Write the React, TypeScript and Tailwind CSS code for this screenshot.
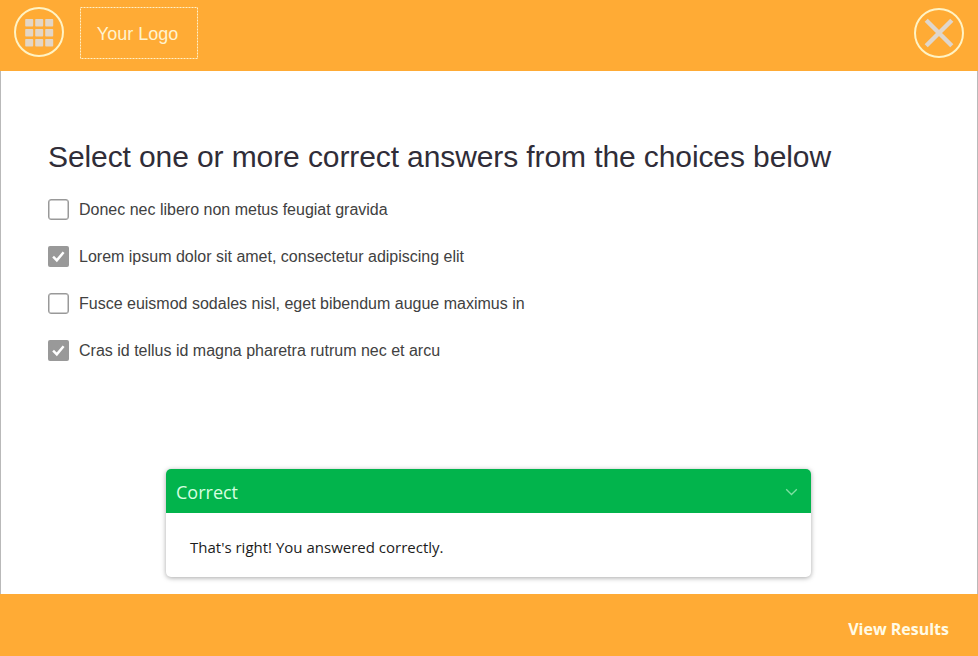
const choices = [
  { text: 'Donec nec libero non metus feugiat gravida', checked: false },
  { text: 'Lorem ipsum dolor sit amet, consectetur adipiscing elit', checked: true },
  { text: 'Fusce euismod sodales nisl, eget bibendum augue maximus in', checked: false },
  { text: 'Cras id tellus id magna pharetra rutrum nec et arcu', checked: true },
];

function MenuIcon() {
  const cells = [0, 1, 2];
  return (
    <svg className="block" width="50" height="50" viewBox="0 0 50 50">
      <circle cx="25" cy="25" r="24" fill="none" stroke="#fff3c4" strokeWidth="2" />
      {cells.map((r) =>
        cells.map((c) => (
          <rect key={`${r}-${c}`} x={11.2 + c * 10} y={12 + r * 10} width="8" height="7.6" rx="0.8" fill="#e3d6c6" />
        )),
      )}
    </svg>
  );
}

function CloseIcon() {
  return (
    <svg className="block" width="50" height="50" viewBox="0 0 50 50">
      <circle cx="25" cy="25" r="24" fill="none" stroke="#fff3c4" strokeWidth="2" />
      <path d="M12.2 12.2 37.8 37.8M37.8 12.2 12.2 37.8" stroke="#dfd6cc" strokeWidth="4.4" fill="none" />
    </svg>
  );
}

function Checkbox({ checked }: { checked: boolean }) {
  return checked ? (
    <span className="flex h-[21px] w-[21px] shrink-0 items-center justify-center rounded-[2px] bg-[#999999]">
      <svg width="21" height="21" viewBox="0 0 21 21">
        <path d="M5.1 10.7 8.8 14.3 15.6 6.3" stroke="#fff" strokeWidth="2.5" fill="none" />
      </svg>
    </span>
  ) : (
    <span className="h-[21px] w-[21px] shrink-0 rounded-[3px] border border-[#999999] bg-white shadow-[inset_0_0_0_0.5px_#999999]" />
  );
}

export default function App() {
  return (
    <div className="flex h-[656px] w-[978px] flex-col overflow-hidden bg-white font-['Liberation_Sans',Arial,sans-serif]">
      <header className="flex h-[71px] shrink-0 items-start justify-between bg-[#ffab35] pt-[7px] pr-[14px] pl-[14px]">
        <div className="flex items-start gap-4">
          <button><MenuIcon /></button>
          <div className="relative flex h-[52px] w-[118px] items-center justify-center pt-[2px] pr-[3px] text-[18px] text-[#fff3cf]">
            <svg className="absolute inset-0" width="118" height="52" viewBox="0 0 118 52">
              <rect x="0.5" y="0.5" width="117" height="51" fill="none" stroke="#fff0c8" strokeDasharray="2 1" />
            </svg>
            <span className="whitespace-nowrap">Your Logo</span>
          </div>
        </div>
        <button className="mt-px"><CloseIcon /></button>
      </header>

      <main className="flex h-[523px] shrink-0 flex-col border-x border-[#b9b9b9] pl-[47px]">
        <h1 className="mt-[68px] text-[30px] leading-[36px] tracking-[-0.1px] whitespace-nowrap text-[#302d38]">
          Select one or more correct answers from the choices below
        </h1>
        <ul className="mt-[24px] flex flex-col gap-[26px]">
          {choices.map((c) => (
            <li key={c.text} className="flex h-[21px] items-center gap-[10px] text-[16px] whitespace-nowrap text-[#414141]">
              <Checkbox checked={c.checked} />
              <span>{c.text}</span>
            </li>
          ))}
        </ul>
        <section className="mt-[108px] ml-[118px] h-[108px] w-[645px] overflow-hidden rounded-[5px] bg-white font-['Open_Sans',sans-serif] shadow-[0_1px_5px_rgba(0,0,0,0.35)]">
          <div className="flex h-[44px] items-center justify-between bg-[#02b44c] pr-[13px] pl-[10px] text-[18px] text-[#d5ffe0]">
            <span className="pt-[2px]">Correct</span>
            <svg className="mt-[2px]" width="13" height="8" viewBox="0 0 13 8" fill="none" stroke="#7fe0a2" strokeWidth="1.3">
              <path d="M1.2 1.2 6.5 6.5 11.8 1.2" />
            </svg>
          </div>
          <p className="pt-[23px] pl-6 text-[15px] leading-[22px] text-[#1c1c1c]">That's right! You answered correctly.</p>
        </section>
      </main>

      <footer className="flex h-[62px] shrink-0 items-center justify-end bg-[#ffab35] pt-[8px] pr-[29px] font-['Open_Sans',sans-serif] text-[16px] font-bold text-[#fffbe6]">
        <span>View Results</span>
      </footer>
    </div>
  );
}
